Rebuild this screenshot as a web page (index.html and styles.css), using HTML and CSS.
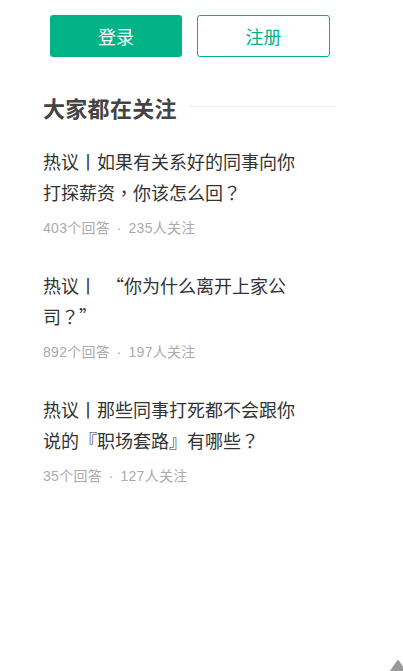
FILE: index.html
```html
<!DOCTYPE html>
<html lang="zh-CN">
<head>
<meta charset="utf-8">
<link rel="stylesheet" href="styles.css">
</head>
<body>
<div class="page">
  <div class="auth">
    <a class="btn btn-primary">登录</a>
    <a class="btn btn-outline">注册</a>
  </div>
  <section class="hot">
    <div class="hot-head">
      <h2 class="hot-title">大家都在关注</h2>
      <span class="hot-line"></span>
    </div>
    <ul class="list">
      <li class="item">
        <p class="item-title">热议丨如果有关系好的同事向你打探薪资<span class="punc" lang="zh-TW">，</span>你该怎么回<span class="punc" lang="zh-TW">？</span></p>
        <p class="item-meta">403个回答 · 235人关注</p>
      </li>
      <li class="item">
        <p class="item-title">热议丨&ensp;“你为什么离开上家公司<span class="punc" lang="zh-TW">？</span>”</p>
        <p class="item-meta">892个回答 · 197人关注</p>
      </li>
      <li class="item">
        <p class="item-title">热议丨那些同事打死都不会跟你说的『职场套路』有哪些<span class="punc" lang="zh-TW">？</span></p>
        <p class="item-meta">35个回答 · 127人关注</p>
      </li>
    </ul>
  </section>
</div>
<div class="to-top">
  <svg width="20" height="20" viewBox="0 0 20 20"><path d="M10 1 L19 14 L1 14 Z" fill="#9a9a9a" stroke="#9a9a9a" stroke-width="2" stroke-linejoin="round"/></svg>
</div>
</body>
</html>
```

FILE: styles.css
```css
* { box-sizing: border-box; }
html, body {
  margin: 0;
  padding: 0;
  background: #fff;
}
body {
  font-family: "Noto Sans CJK SC", "Noto Sans", sans-serif;
  width: 403px;
  height: 671px;
  overflow: hidden;
}
.page {
  padding: 15px 0 0 43px;
}
.auth {
  display: flex;
  gap: 15px;
  padding-left: 7px;
}
.btn {
  display: flex;
  align-items: center;
  justify-content: center;
  width: 132px;
  height: 42px;
  border-radius: 3px;
  font-size: 18px;
  line-height: 1;
  text-decoration: none;
}
.btn-primary {
  background: #02b388;
  color: #fff;
}
.btn-outline {
  width: 133px;
  border: 1px solid #02b388;
  color: #02b388;
  background: #fff;
}
.hot {
  margin-top: 36px;
  width: 293px;
}
.hot-head {
  display: flex;
  align-items: center;
  height: 28px;
}
.hot-title {
  margin: 0;
  font-size: 22px;
  font-weight: 700;
  color: #444;
  line-height: 28px;
  letter-spacing: 0.3px;
}
.hot-line {
  flex: 1;
  height: 1px;
  background: #ececec;
  margin-left: 13px;
  margin-top: -2px;
}
.list {
  list-style: none;
  margin: 25px 0 0;
  padding: 0;
  display: flex;
  flex-direction: column;
  gap: 32px;
}
.item-title {
  margin: 0;
  width: 258px;
  font-size: 18px;
  line-height: 31px;
  color: #333;
}
.punc {
  font-family: "Noto Sans CJK TC", "Noto Sans CJK SC", sans-serif;
}
.item-meta {
  margin: 10px 0 0;
  font-family: "Liberation Sans", "Noto Sans CJK SC", sans-serif;
  font-size: 14px;
  line-height: 20px;
  color: #aaa;
  word-spacing: 2.5px;
  letter-spacing: 0.3px;
}
.to-top {
  position: fixed;
  left: 388px;
  top: 660px;
  width: 20px;
  height: 20px;
}
.to-top svg { display: block; }
```
